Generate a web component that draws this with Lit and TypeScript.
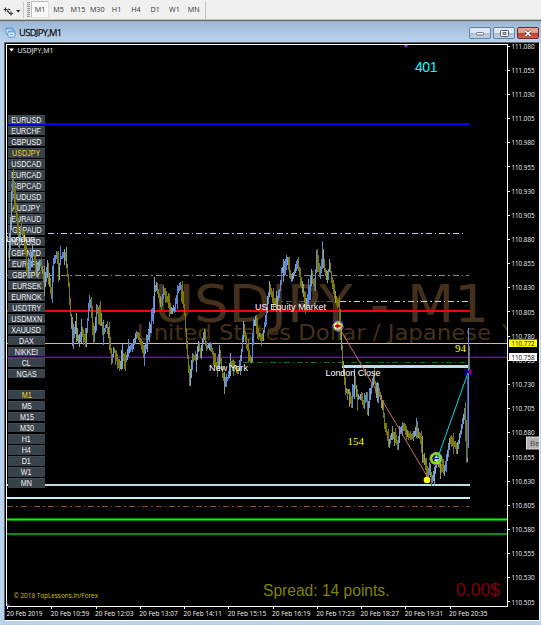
import { LitElement, html, svg, css } from "lit";
import { customElement } from "lit/decorators.js";
import { classMap } from "lit/directives/class-map.js";

const SYMBOLS = ["EURUSD", "EURCHF", "GBPUSD", "USDJPY", "USDCAD", "EURCAD", "GBPCAD", "AUDUSD", "AUDJPY", "EURAUD", "GBPAUD", "NZDUSD", "GBPNZD", "EURJPY", "GBPJPY", "EURSEK", "EURNOK", "USDTRY", "USDMXN", "XAUUSD", "DAX", "NIKKEI", "CL", "NGAS"];
const FRAMES = ["M1", "M5", "M15", "M30", "H1", "H4", "D1", "W1", "MN"];
const TIMES = ["2019", "10:59", "12:03", "13:07", "14:11", "15:15", "16:19", "17:23", "18:27", "19:31", "20:35"];

// Turning points of the price curve, in chart coordinates.
const PRICE: number[][] = [
  [8, 256], [10, 225], [11, 195], [12, 180], [14, 200], [16, 215], [18, 245], [20, 228], [24, 240], [27, 276], [30, 256], [33, 255], [36, 272], [40, 262], [44, 283], [47, 268], [51, 296], [53, 260], [56, 255], [58, 270], [60, 258], [64, 255], [66, 265], [68, 285], [70, 315], [72, 340], [75, 325], [78, 342], [81, 330], [85, 342], [88, 308], [90, 300], [93, 340], [96, 308], [100, 315], [102, 333], [106, 325], [109, 340], [111, 362], [113, 349], [116, 357], [119, 367], [122, 355], [125, 360],
  [128, 350], [132, 346], [136, 333], [140, 342], [143, 353], [147, 338], [150, 325], [153, 305], [154, 289], [156, 285], [158, 297], [161, 305], [163, 290], [167, 300], [170, 310], [174, 309], [177, 290], [180, 286], [182, 295], [184, 315], [186, 345], [189, 382], [192, 357], [195, 360], [198, 345], [200, 355], [203, 333], [206, 348], [210, 345], [214, 362], [217, 368], [219, 354], [222, 376], [224, 383], [227, 378], [230, 363], [233, 365], [236, 370], [238, 370], [241, 350], [243, 326], [246, 345], [249, 357], [251, 360],
  [253, 323], [255, 320], [258, 335], [262, 338], [265, 320], [267, 300], [269, 286], [272, 300], [276, 303], [279, 290], [281, 272], [284, 264], [287, 260], [290, 278], [293, 275], [297, 262], [300, 280], [303, 293], [305, 308], [308, 292], [311, 280], [314, 288], [316, 252], [319, 276], [322, 252], [324, 270], [327, 278], [329, 264], [331, 280], [334, 295], [336, 302], [338, 305], [340, 330], [342, 365],
  [345, 390], [348, 393], [351, 403], [354, 380], [357, 398], [360, 396], [363, 405], [366, 395], [367, 413], [370, 390], [373, 378], [376, 393], [378, 390], [382, 405], [384, 425], [388, 443], [391, 437], [394, 437], [397, 448], [399, 430], [402, 427], [405, 430], [408, 435], [412, 437], [416, 430], [420, 440], [422, 455], [425, 463], [427, 476], [429, 465], [431, 482], [433, 473], [437, 460], [440, 468], [443, 472], [446, 460], [449, 440], [453, 443], [456, 450], [460, 432], [464, 412], [466, 458], [468, 448],
];

interface Bar { x: number; top: number; bottom: number; color: string }

function buildBars(): Bar[] {
  const bars: Bar[] = [];
  let i = 0;
  let prev = PRICE[0][1];
  let seed = 7;
  const rnd = () => {
    seed = (seed * 16807) % 2147483647;
    return seed / 2147483647;
  };
  for (let x = 8; x <= 467; x++) {
    while (i < PRICE.length - 2 && PRICE[i + 1][0] < x) i++;
    const [x0, y0] = PRICE[i];
    const [x1, y1] = PRICE[i + 1];
    const y = y0 + ((y1 - y0) * (x - x0)) / (x1 - x0);
    const reach = rnd() > 0.72 ? 12 : 4;
    const top = Math.round(Math.min(prev, y) - 1 - rnd() * reach);
    const bottom = Math.round(Math.max(prev, y) + 1 + rnd() * reach);
    const rising = y < prev;
    const r = rnd();
    bars.push({ x, top, bottom, color: rising ? (r > 0.6 ? "#7da7c4" : "#5b88d6") : r > 0.85 ? "#8f9c68" : "#7c7908" });
    prev = y;
  }
  return bars;
}

const BARS = buildBars();
const DASH = "6 3 1.5 3";

@customElement("app-root")
export class AppRoot extends LitElement {
  static styles = css`
    :host { display: block; width: 541px; height: 625px; overflow: hidden; background: #b9d1ea; font-family: "Liberation Sans", sans-serif; }
    * { box-sizing: border-box; }
    .app { display: flex; flex-direction: column; height: 625px; }
    .toolbar { height: 20px; display: flex; align-items: center; background: #f0f0f0; border-bottom: 1px solid #c9c9c4; }
    .tool { width: 24px; height: 18px; flex: none; }
    .grip { width: 3px; height: 15px; margin: 0 1px 0 3px; background: repeating-linear-gradient(#9a9a9a 0 1px, #e4e4e4 1px 2px); }
    .frames { display: flex; border-right: 1px solid #c4c4c4; height: 18px; align-items: center; width: 175px; }
    .frame { width: 19.3px; text-align: center; font: 7.2px "Open Sans", "DejaVu Sans", sans-serif; color: #303030; line-height: 15px; }
    .frame.on { width: 18px; height: 17px; background: #fafafa; border: 1px solid #bdbdbd; border-right-color: #e2e2e2; border-bottom-color: #e2e2e2; }
    .title { height: 22px; display: flex; align-items: center; padding: 2px 2px 0 5px; border-top: 1px solid #62625e; background: linear-gradient(#9bb6d3, #b7d0ea 85%); }
    .title svg { flex: none; }
    .name { flex: 1; padding-left: 3px; font: 9.4px "Open Sans", "DejaVu Sans", sans-serif; letter-spacing: -0.65px; color: #111; -webkit-text-stroke: 0.25px #111; }
    .controls { display: flex; gap: 2px; padding-top: 1px; }
    .control { width: 22px; height: 12px; border: 1px solid #66809e; border-radius: 2px; background: linear-gradient(#dce8f4 0 45%, #a7bfd9 50%, #bfd3e8); display: flex; align-items: center; justify-content: center; }
    .control.close { border-color: #692e2b; background: linear-gradient(#dda296 0 45%, #bd3b27 50%, #cf604c); }
    .chart { position: relative; height: 579px; margin: 0 1px 0 4px; border: 1px solid #686868; border-right: 1px solid #f8f8f8; border-bottom: 1.5px solid #fff; background: #000; overflow: hidden; }
    .layer { position: absolute; left: -5px; top: -43px; display: block; }
    .buttons { position: absolute; left: 3px; top: 72px; display: flex; flex-direction: column; width: 37px; }
    .pair { height: 11.05px; display: flex; }
    .face { width: 37px; height: 9.4px; background: #38424b; border-top: 1px solid #434d56; color: #f0f0f0; font-size: 8.2px; line-height: 9px; display: flex; justify-content: center; white-space: nowrap; }
    .label { transform: scaleX(0.87); }
    .pair.on .face { color: #f3d41c; }
    .gap { height: 9.8px; }
    .axis { font-family: "Open Sans", "DejaVu Sans", sans-serif; font-size: 7.4px; fill: #f4f4f4; }
    .note { font-family: "Liberation Sans", sans-serif; font-size: 9px; fill: #fff; }
    .mark { font-family: "DejaVu Sans", sans-serif; fill: #45301c; }
    .serif { font-family: "Liberation Serif", serif; font-size: 11px; fill: #ff0; }
    .big { font-family: "Liberation Sans", sans-serif; }
  `;

  private line(y: number, color: string, height: number, from = 7, to = 470) {
    return svg`<rect x=${from} y=${y} width=${to - from} height=${height} fill=${color}></rect>`;
  }

  private dashed(y: number, color: string, from: number, to: number) {
    return svg`<line x1=${from} x2=${to} y1=${y} y2=${y} stroke=${color} stroke-width="1" stroke-dasharray=${DASH}></line>`;
  }

  private button(label: string, on: boolean) {
    return html`<div class=${classMap({ pair: true, on })}><div class="face"><span class="label">${label}</span></div></div>`;
  }

  private back() {
    return html`<svg class="layer" width="541" height="625" viewBox="0 0 541 625">
      <clipPath id="plot"><rect x="7" y="45" width="500" height="561"></rect></clipPath>
      <g clip-path="url(#plot)">
        <text class="mark" x="154" y="322" font-size="52.3" textLength="335" lengthAdjust="spacingAndGlyphs">USDJPY - M1</text>
        <text class="mark" x="137" y="340" font-size="22" textLength="354" lengthAdjust="spacingAndGlyphs">United States Dollar / Japanese</text>
        <text class="mark" x="502" y="340" font-size="22">Yen</text>
      </g>
      <g shape-rendering="crispEdges">
        ${this.line(123, "#0000ff", 2)}
        ${this.dashed(233.5, "#a9d3df", 7, 466)}
        ${this.dashed(275.5, "#858585", 7, 469)}
        ${this.dashed(301.5, "#5c5650", 272, 340)}
        ${this.dashed(301.5, "#d0ccc8", 340, 470)}
        ${this.line(310, "#fa0000", 2)}
        ${this.line(343, "#d8d800", 1, 7, 507)}
        ${this.line(356, "#24083e", 1, 7, 507)}
        ${this.line(357, "#5c1c96", 1, 7, 507)}
        ${this.dashed(362.5, "#087808", 216, 469)}
        ${this.line(365, "#b5e0eb", 3, 342)}
        ${this.line(484, "#b8e0e2", 2)}
        ${this.line(497, "#c5eff2", 2)}
        ${this.dashed(506.5, "#9a4c2c", 7, 469)}
        ${this.line(518, "#008b00", 3, 7, 507)}
        ${this.line(519, "#18ee18", 1, 7, 507)}
        ${this.line(533, "#058c05", 2, 7, 507)}
      </g>
    </svg>`;
  }

  private front() {
    return html`<svg class="layer" width="541" height="625" viewBox="0 0 541 625">
      <g shape-rendering="crispEdges">
        ${BARS.map((b) => svg`<rect x=${b.x} y=${b.top} width="1" height=${b.bottom - b.top} fill=${b.color}></rect>`)}
      </g>
      <text class="note" x="6" y="242" textLength="29">London</text>
      <text class="note" x="209" y="371" textLength="39">New York</text>
      <text class="note" x="255" y="310" textLength="71">US Equity Market</text>
      <text class="note" x="325.5" y="375.5" textLength="55">London Close</text>
      <circle cx="338" cy="326" r="5.2" fill="#7fe00c" stroke="#8a2be2" stroke-width="1.5" stroke-dasharray="3.5 3"></circle>
      <circle cx="337.500" cy="326" r="3.200" fill="#fff"></circle>
      <path d="M335 325h1.500v-1.500h2v1.500h2v2h-2v1.500h-2v-1.500h-1.500z" fill="#d00"></path>
      <circle cx="436" cy="458.5" r="5" fill="none" stroke="#7fe00c" stroke-width="3"></circle>
      <circle cx="436" cy="458.5" r="6.3" fill="none" stroke="#8a2be2" stroke-width="1" stroke-dasharray="4 4"></circle>
      <path d="M434.5 456.5h3v1.5h2v1.5h-2v2h-3z" fill="#c8e8ff"></path>
      <path d="M434 458.5h5" stroke="#0000e0" stroke-width="1"></path>
      <circle cx="427" cy="480" r="3.3" fill="#ff0"></circle>
      <path d="M340 329L427 476" stroke="#c9705c" stroke-width="1"></path>
      <path d="M438 457L469 370" stroke="#00dede" stroke-width="1"></path>
      <g shape-rendering="crispEdges">
        <rect x="468" y="328" width="1" height="120" fill="#5b8cea"></rect>
        <rect x="467" y="376" width="1" height="82" fill="#365c91"></rect>
        <rect x="469" y="346" width="1" height="24" fill="#7c7908"></rect>
        <rect x="466" y="420" width="1" height="42" fill="#7c7908"></rect>
      </g>
      <path d="M464 369l8 6m-8 0l8-6" stroke="#0000dd" stroke-width="1.3"></path>
      <path d="M468.5 372l3-2.5v5z" fill="#e80030"></path>
      <path d="M403 44h6l-3 4z" fill="#9438ff"></path>
      <path d="M7 603l3 3H7z" fill="#8a2be2"></path>
      <g shape-rendering="crispEdges">
        <path d="M6.5 606V44.5H507.5V606.5H7" fill="none" stroke="#fff" stroke-width="1"></path>
        ${Array.from({ length: 24 }, (_, i) => svg`<rect x="508" y=${Math.round(45.5 + i * 24.17)} width="2" height="1" fill="#fff"></rect>`)}
        ${TIMES.map((_, i) => svg`<rect x=${Math.round(7 + i * 44.25)} y="607" width="1" height="2" fill="#fff"></rect>`)}
      </g>
      ${Array.from({ length: 24 }, (_, i) => svg`<text class="axis" x="511.5" y=${48.7 + i * 24.17} textLength="23" lengthAdjust="spacingAndGlyphs">${(111.08 - i * 0.025).toFixed(3)}</text>`)}
      ${TIMES.map((t, i) => svg`<text class="axis" x=${6.5 + i * 44.25} y="615.5" textLength=${i ? 38.5 : 36} lengthAdjust="spacingAndGlyphs">20 Feb ${t}</text>`)}
      <rect x="509" y="353" width="28" height="8" fill="#fff"></rect>
      <text class="axis" x="511.5" y="360" textLength="23" lengthAdjust="spacingAndGlyphs" style="fill:#000">110.758</text>
      <rect x="509" y="339.5" width="28" height="7.5" fill="#ff0"></rect>
      <text class="axis" x="511.5" y="346.2" textLength="23" lengthAdjust="spacingAndGlyphs" style="fill:#000">110.772</text>
      <path d="M9 48.5h5l-2.5 3z" fill="#fff"></path>
      <text class="axis" x="17.5" y="52.8" textLength="36" lengthAdjust="spacingAndGlyphs">USDJPY,M1</text>
      <text class="big" x="415" y="72" font-size="14" textLength="22.5" fill="#0ff">401</text>
      <text class="serif" x="455" y="351.5">94</text>
      <text class="serif" x="347.5" y="445">154</text>
      <text x="13.5" y="598" font-size="7.4" font-family="Open Sans, sans-serif" textLength="84.5" lengthAdjust="spacingAndGlyphs" fill="#d8c400">© 2018 TopLessons.In/Forex</text>
      <text class="big" x="263" y="596" font-size="16" textLength="126.5" lengthAdjust="spacingAndGlyphs" fill="#828200">Spread: 14 points.</text>
      <text class="big" x="456" y="596" font-size="17.5" textLength="44" lengthAdjust="spacingAndGlyphs" fill="#850000">0.00$</text>
      <rect x="526.5" y="437" width="18" height="12" fill="#b0b0b0" stroke="#d8d8d8" stroke-width="1"></rect>
      <text x="530" y="446" font-size="8" font-family="Open Sans, sans-serif" fill="#444">Bes</text>
    </svg>`;
  }

  render() {
    return html`<div class="app">
      <div class="toolbar">
        <svg class="tool" viewBox="0 0 24 18">
          <path d="M3.500 8.500h4M5.500 6.500v4M7 9.500l2.500 2.500M9 12.500h4M11 10.500v4M8 8l2.500 1" fill="none" stroke="#333" stroke-width="1.2"></path>
          <path d="M16 9h4.5l-2.25 2.5z" fill="#222"></path>
          <path d="M23.5 1v16" stroke="#c9c9c9"></path>
        </svg>
        <div class="grip"></div>
        <div class="frames">${FRAMES.map((f, i) => html`<div class=${classMap({ frame: true, on: i === 0 })}>${f}</div>`)}</div>
      </div>
      <div class="title">
        <svg width="11" height="11" viewBox="0 0 11 11">
          <rect x="1" y="1" width="7" height="6" rx="1" fill="#eaf5ff" stroke="#4c91dc"></rect>
          <rect x="3" y="4" width="7" height="6" rx="1" fill="#f6fbff" stroke="#4c91dc"></rect>
          <path d="M1 2h7M3 5h7M4.5 8l1.5-1 1 1 1.5-1" stroke="#4c91dc" fill="none"></path>
        </svg>
        <div class="name">USDJPY,M1</div>
        <div class="controls">
          <div class="control"><svg width="8" height="6"><rect x=".5" y="2.5" width="7" height="2.5" rx="1" fill="#fff" stroke="#4c5a69" stroke-width=".8"></rect></svg></div>
          <div class="control"><svg width="9" height="7"><rect x=".5" y=".5" width="8" height="6" rx="1" fill="#fff" stroke="#4c5a69"></rect><rect x="3" y="2.500" width="3" height="2" fill="#b7cbe0" stroke="#4c5a69" stroke-width=".8"></rect></svg></div>
          <div class="control close"><svg width="8" height="7"><path d="M1.5 1l5 5m0-5l-5 5" stroke="#5b3c40" stroke-width="2.8"></path><path d="M1.5 1l5 5m0-5l-5 5" stroke="#fff" stroke-width="1.6"></path></svg></div>
        </div>
      </div>
      <div class="chart">
        ${this.back()}
        <div class="buttons">
          ${SYMBOLS.map((s) => this.button(s, s === "USDJPY"))}
          <div class="gap"></div>
          ${FRAMES.map((f) => this.button(f, f === "M1"))}
        </div>
        ${this.front()}
      </div>
    </div>`;
  }
}
